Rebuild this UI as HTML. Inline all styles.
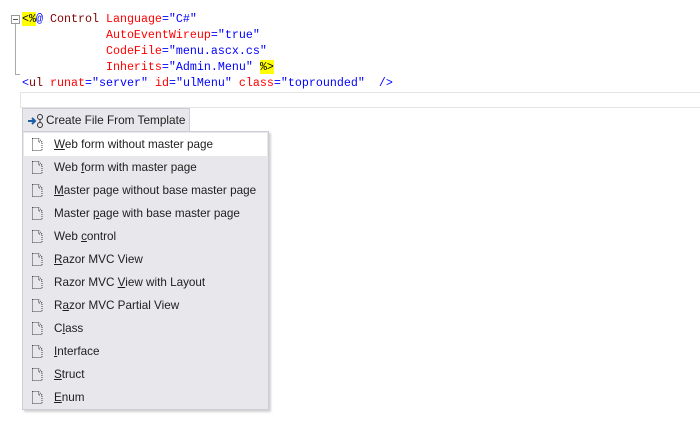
<!DOCTYPE html>
<html><head><style>
body{margin:0;width:700px;height:422px;background:#fff;position:relative;overflow:hidden;font-family:"Liberation Sans",sans-serif}
.code{position:absolute;left:22px;font-family:"Liberation Mono",monospace;font-size:11.67px;white-space:pre;line-height:15.5px}
.k{color:#800000}.a{color:#f00}.v{color:#00f}.y{background:#ff0;color:#000}
.fold{position:absolute;left:11px;top:15px;width:7px;height:7px;border:1px solid #999;background:#fff}
.fold:after{content:"";position:absolute;left:1px;top:3px;width:5px;height:1px;background:#555}
.vl{position:absolute;left:15px;top:24px;width:1px;height:50px;background:#aaa}
.hl{position:absolute;left:15px;top:74px;width:5px;height:1px;background:#aaa}
.cur{position:absolute;left:20px;top:92px;width:690px;height:14px;border:1px solid #e4e4e4}
.tab{position:absolute;left:22px;top:108px;width:166px;height:24px;background:#e8e8ec;border:1px solid #ccced6;border-bottom:none;font-size:11.8px;line-height:23px;color:#1e1e1e}
.menu{position:absolute;left:22px;top:131px;width:245px;height:277px;background:#e8e8ec;border:1px solid #ccced6;box-shadow:2px 2px 2px rgba(0,0,0,.18)}
.it{height:23px;line-height:23px;font-size:11.7px;color:#1e1e1e;padding-left:30px;position:relative;margin:0 1px}
.it.sel{background:#fff}
.it svg{position:absolute;left:8px;top:5px}
u{text-decoration:underline}
</style></head><body>
<svg width="0" height="0" style="position:absolute"><defs><symbol id="pg" viewBox="0 0 11 13"><path d="M0.5 0.5h6l3.5 3.5v8.5h-9.5z M6.5 0.5v3.5h3.5" fill="none" stroke="#444" stroke-width="1" stroke-dasharray="1 1"/></symbol></defs></svg>
<div class="fold"></div><div class="vl"></div><div class="hl"></div>
<div class="code" style="top:12px"><span class="y">&lt;%</span><span class="v">@</span> <span class="k">Control</span> <span class="a">Language</span><span class="v">="C#"</span></div>
<div class="code" style="top:28px">            <span class="a">AutoEventWireup</span><span class="v">="true"</span></div>
<div class="code" style="top:44px">            <span class="a">CodeFile</span><span class="v">="menu.ascx.cs"</span></div>
<div class="code" style="top:60px">            <span class="a">Inherits</span><span class="v">="Admin.Menu"</span> <span class="y">%&gt;</span></div>
<div class="code" style="top:76px"><span class="v">&lt;</span><span class="k">ul</span> <span class="a">runat</span><span class="v">="server"</span> <span class="a">id</span><span class="v">="ulMenu"</span> <span class="a">class</span><span class="v">="toprounded"</span>  <span class="v">/&gt;</span></div>
<div class="cur"></div>
<div class="tab"><svg width="20" height="20" style="position:absolute;left:3px;top:2px"><path d="M2 10h7M6 7l3 3-3 3" stroke="#1e5ea8" stroke-width="2" fill="none"/><circle cx="14" cy="6" r="2.5" stroke="#333" fill="none"/><circle cx="14" cy="14" r="2.5" stroke="#333" fill="none"/><path d="M14 8.5v3" stroke="#333"/></svg><span style="position:absolute;left:23px">Create File From Template</span></div>
<div class="menu">
<div class="it sel" style="margin-top:1px"><svg width="11" height="13"><use href="#pg"/></svg><u>W</u>eb form without master page</div>
<div class="it"><svg width="11" height="13"><use href="#pg"/></svg>Web <u>f</u>orm with master page</div>
<div class="it"><svg width="11" height="13"><use href="#pg"/></svg><u>M</u>aster page without base master page</div>
<div class="it"><svg width="11" height="13"><use href="#pg"/></svg>Master <u>p</u>age with base master page</div>
<div class="it"><svg width="11" height="13"><use href="#pg"/></svg>Web <u>c</u>ontrol</div>
<div class="it"><svg width="11" height="13"><use href="#pg"/></svg><u>R</u>azor MVC View</div>
<div class="it"><svg width="11" height="13"><use href="#pg"/></svg>Razor MVC <u>V</u>iew with Layout</div>
<div class="it"><svg width="11" height="13"><use href="#pg"/></svg>R<u>a</u>zor MVC Partial View</div>
<div class="it"><svg width="11" height="13"><use href="#pg"/></svg>C<u>l</u>ass</div>
<div class="it"><svg width="11" height="13"><use href="#pg"/></svg><u>I</u>nterface</div>
<div class="it"><svg width="11" height="13"><use href="#pg"/></svg><u>S</u>truct</div>
<div class="it"><svg width="11" height="13"><use href="#pg"/></svg><u>E</u>num</div>
</div>
</body></html>
